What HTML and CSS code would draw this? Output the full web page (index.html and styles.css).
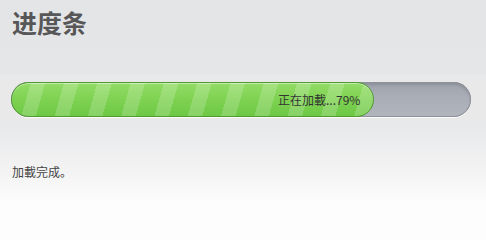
FILE: index.html
```html
<!DOCTYPE html>
<html lang="zh">
<head>
<meta charset="utf-8">
<title>进度条</title>
<link rel="stylesheet" href="styles.css">
</head>
<body>
<div class="page">
  <h1 class="title">进度条</h1>
  <div class="panel">
    <div class="track">
      <div class="fill" style="width: 79%;">
        <span class="label">正在加載...79%</span>
      </div>
    </div>
  </div>
  <p class="status">加載完成。</p>
</div>
</body>
</html>
```
FILE: styles.css
```css
html, body {
  margin: 0;
  padding: 0;
}
html {
  background: #fdfdfd;
}
body {
  height: 201px;
  overflow: hidden;
  background: linear-gradient(to bottom, #e3e4e6 0%, #e7e8e9 60%, #f3f3f4 85%, #fcfcfc 100%);
  font-family: "Liberation Sans", "Noto Sans CJK SC", sans-serif;
  color: #333;
}
.page {
  padding: 7px 0 0 0;
}
.title {
  margin: 0 0 0 12px;
  font-family: "Noto Sans CJK SC", sans-serif;
  font-size: 25px;
  line-height: 30px;
  font-weight: bold;
  color: #575757;
}
.panel {
  margin-top: 38px;
  padding: 7px 15px 6px 11px;
  background: #e9e9ea;
}
.track {
  box-sizing: border-box;
  height: 35px;
  border-radius: 18px;
  background: linear-gradient(to bottom, #9ea2ac 0%, #a9adb6 40%, #b1b5be 100%);
  box-shadow: inset 0 0 0 1px #8e929b, inset 0 3px 3px rgba(0,0,0,0.12), 0 1px 0 rgba(255,255,255,0.8);
  overflow: hidden;
}
.fill {
  box-sizing: border-box;
  height: 35px;
  border: 1px solid #4f9b2f;
  border-radius: 18px;
  background:
    repeating-linear-gradient(106deg, rgba(255,255,255,0) 0px, rgba(255,255,255,0) 18px, rgba(255,255,255,0.18) 18px, rgba(255,255,255,0.18) 32px),
    linear-gradient(to bottom, #93dc67 0%, #80d353 45%, #6dc845 100%);
  box-shadow: inset 0 1px 0 rgba(255,255,255,0.45);
  display: flex;
  align-items: center;
  justify-content: flex-end;
  padding-right: 13px;
}
.label {
  font-size: 12px;
  color: #333;
  font-family: "Noto Sans CJK SC", sans-serif;
}
.status {
  margin: 40px 0 0 12px;
  font-size: 12px;
  font-family: "Noto Sans CJK SC", sans-serif;
  color: #444;
}
```
